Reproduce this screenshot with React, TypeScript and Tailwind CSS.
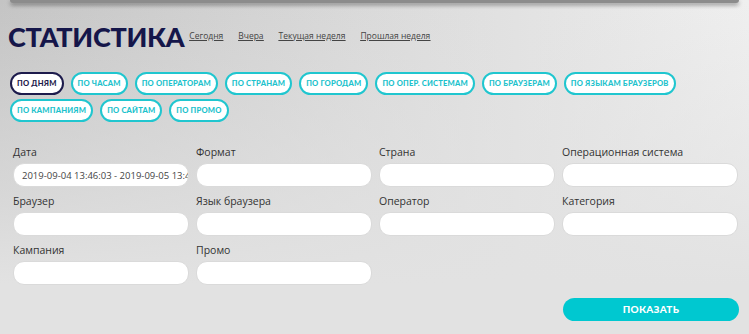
import React from "react";

const tabs1 = [
  "По дням",
  "По часам",
  "По операторам",
  "По странам",
  "По городам",
  "По опер. системам",
  "По браузерам",
  "По языкам браузеров",
];
const tabs2 = ["По кампаниям", "По сайтам", "По промо"];

const fields = [
  ["Дата", "2019-09-04 13:46:03 - 2019-09-05 13:46:03"],
  ["Формат", ""],
  ["Страна", ""],
  ["Операционная система", ""],
  ["Браузер", ""],
  ["Язык браузера", ""],
  ["Оператор", ""],
  ["Категория", ""],
  ["Кампания", ""],
  ["Промо", ""],
];

function Tab({ label, active }: { label: string; active?: boolean }) {
  return (
    <button
      className={
        active
          ? "shrink-0 whitespace-nowrap h-[23px] px-[5px] rounded-full border-2 border-[#1d1b4c] bg-white text-[#1d1b4c] text-[7.6px] tracking-[0.2px] font-black uppercase leading-none"
          : "shrink-0 whitespace-nowrap h-[23px] px-[5px] rounded-full border-2 border-[#20c6cf] bg-white text-[#1cc2cc] text-[7.6px] tracking-[0.2px] font-black uppercase leading-none"
      }
      style={{ fontFamily: "Lato, sans-serif" }}
    >
      {label}
    </button>
  );
}

export default function App() {
  return (
    <div
      className="w-[749px] h-[334px] overflow-hidden bg-[linear-gradient(to_bottom,rgba(226,226,226,0)_0%,rgba(226,226,226,0.6)_55%,#e2e2e2_85%),linear-gradient(to_right,#c4c4c4_0%,#d8d8d8_45%,#efefef_100%)] flex flex-col"
      style={{ fontFamily: "'Open Sans', sans-serif" }}
    >
      <div className="mx-[10px] h-[3px] rounded-b-[3px] bg-[#8c8c8c] shadow-[0_2px_4px_rgba(0,0,0,0.45)]" />
      <div className="flex items-center pl-[8px] mt-[21px] gap-[5px]">
        <h1
          className="text-[27px] leading-[26px] font-black text-[#15164a] tracking-[-0.3px]"
          style={{ fontFamily: "Lato, sans-serif" }}
        >
          СТАТИСТИКА
        </h1>
        <div className="flex gap-[15px] text-[8.5px] text-[#444] underline -mt-[2px]">
          <a>Сегодня</a>
          <a>Вчера</a>
          <a>Текущая неделя</a>
          <a>Прошлая неделя</a>
        </div>
      </div>
      <div className="flex flex-col gap-[4px] pl-[10px] mt-[22px]">
        <div className="flex gap-[7px]">
          {tabs1.map((t, i) => (
            <Tab key={t} label={t} active={i === 0} />
          ))}
        </div>
        <div className="flex gap-[7px]">
          {tabs2.map((t) => (
            <Tab key={t} label={t} />
          ))}
        </div>
      </div>
      <div className="grid grid-cols-[176px_176px_176px_176px] gap-x-[7px] gap-y-[7px] pl-[13px] mt-[23px]">
        {fields.map(([label, value]) => (
          <div key={label} className="flex flex-col">
            <label className="text-[10.5px] leading-[15px] text-[#333] mb-[3px]">{label}</label>
            <input
              readOnly
              value={value}
              className="h-[24px] w-[176px] rounded-[11px] border border-[#dadada] bg-white pl-[8px] text-[9.5px] text-[#444] outline-none"
              style={{ fontFamily: "'Open Sans', sans-serif" }}
            />
          </div>
        ))}
      </div>
      <div className="flex justify-end pr-[10px] mt-[13px]">
        <button
          className="w-[176px] h-[23px] rounded-full bg-[#00c8d0] text-white text-[10px] font-black uppercase tracking-[0.3px]"
          style={{ fontFamily: "Lato, sans-serif" }}
        >
          Показать
        </button>
      </div>
    </div>
  );
}
